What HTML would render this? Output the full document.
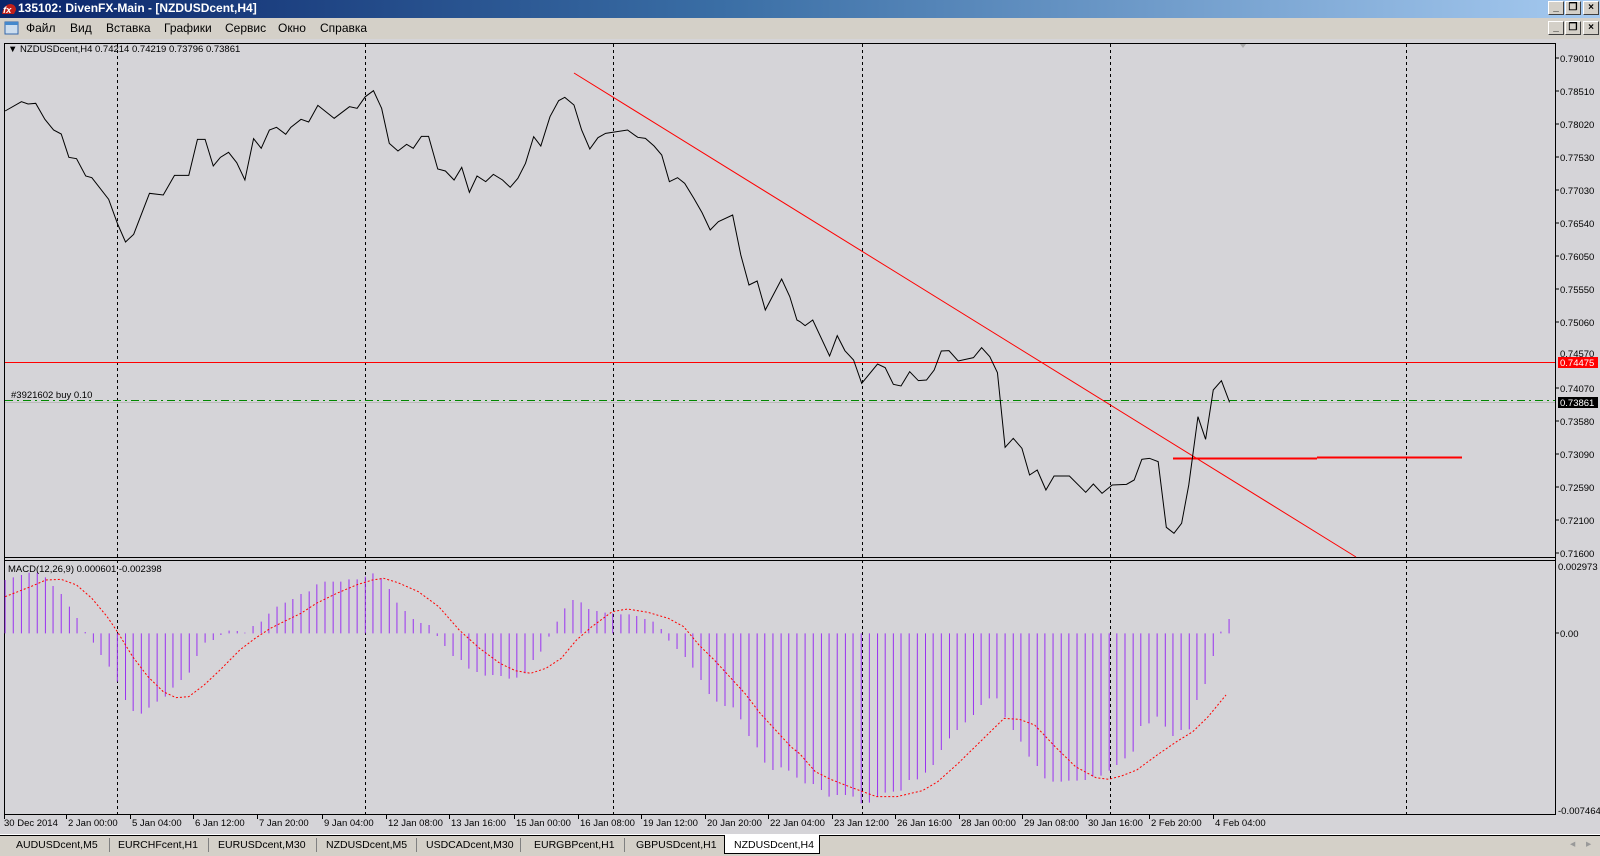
<!DOCTYPE html>
<html><head><meta charset="utf-8"><style>
*{margin:0;padding:0;box-sizing:border-box}
body{width:1600px;height:856px;overflow:hidden;background:#d4d0c8;font-family:"Liberation Sans",sans-serif;position:relative}
#title{position:absolute;left:0;top:0;width:1600px;height:18px;background:linear-gradient(90deg,#0a246a 0%,#3a6ea5 45%,#a6caf0 100%);color:#fff;font-weight:bold;font-size:12px;line-height:17px;padding-left:18px}
#menu{position:absolute;left:0;top:18px;width:1600px;height:20px;font-size:12px;line-height:20px;color:#000}
#menu span{position:absolute}
.btn{position:absolute;width:16px;height:14px;background:#d4d0c8;border:1px solid;border-color:#fff #404040 #404040 #fff;font-size:10px;line-height:12px;text-align:center;color:#000;font-weight:bold}
#tabs{position:absolute;left:0;top:834px;width:1600px;height:22px;border-top:1px solid #fff;font-size:10.5px;color:#000}
#tabs span{position:absolute;top:4px}
.sep{position:absolute;top:3px;width:1px;height:14px;background:#808080}
svg text{font-family:"Liberation Sans",sans-serif;font-size:9.5px}
</style></head><body>
<div id="title"><svg style="position:absolute;left:1px;top:2px" width="16" height="14"><path d="M1 12 Q3 2 10 2 Q15 3 15 8 L13 12Z" fill="#c0201a"/><text x="2" y="11" fill="#fff" font-size="7" font-style="italic">fx</text></svg>135102: DivenFX-Main - [NZDUSDcent,H4]</div>
<div class="btn" style="left:1548px;top:1px">_</div><div class="btn" style="left:1565px;top:1px">&#x2750;</div><div class="btn" style="left:1583px;top:1px">×</div>
<div id="menu">
<svg style="position:absolute;left:4px;top:2px" width="16" height="16"><rect x="1" y="2" width="13" height="12" fill="#cde" stroke="#36a"/><rect x="1" y="2" width="13" height="3" fill="#48c"/></svg>
<span style="left:26px">Файл</span><span style="left:70px">Вид</span><span style="left:106px">Вставка</span><span style="left:164px">Графики</span><span style="left:225px">Сервис</span><span style="left:278px">Окно</span><span style="left:320px">Справка</span>
</div>
<div class="btn" style="left:1548px;top:21px">_</div><div class="btn" style="left:1565px;top:21px">&#x2750;</div><div class="btn" style="left:1583px;top:21px">×</div>
<svg style="position:absolute;left:0;top:0" width="1600" height="856">
<rect x="0" y="39" width="1600" height="795" fill="#d5d4d8"/>
<rect x="4.5" y="43.5" width="1551" height="771" fill="none" stroke="#000"/>
<line x1="4" y1="557.5" x2="1556" y2="557.5" stroke="#000"/>
<line x1="4" y1="560.5" x2="1556" y2="560.5" stroke="#000"/>
<g stroke="#000" stroke-dasharray="3 3">
<line x1="117.5" y1="44" x2="117.5" y2="814"/><line x1="365.5" y1="44" x2="365.5" y2="814"/><line x1="613.5" y1="44" x2="613.5" y2="814"/><line x1="862.5" y1="44" x2="862.5" y2="814"/><line x1="1110.5" y1="44" x2="1110.5" y2="814"/><line x1="1406.5" y1="44" x2="1406.5" y2="814"/>
</g>
<path d="M1240 44 L1246 44 L1243 48Z" fill="#aaa"/>
<line x1="5" y1="362.5" x2="1555" y2="362.5" stroke="#f00"/>
<line x1="5" y1="402.5" x2="1555" y2="402.5" stroke="#bbb"/>
<line x1="5" y1="400.5" x2="1555" y2="400.5" stroke="#080" stroke-dasharray="8 4 2 4"/>
<line x1="574" y1="73" x2="1356" y2="557" stroke="#f00"/>
<path d="M1173 458.5 H1317 M1317 457.5 H1462" stroke="#f00" stroke-width="2"/>
<g transform="translate(0,40) scale(0.5102,0.33333)">
<path fill="none" stroke="#000" stroke-width="1" vector-effect="non-scaling-stroke" d="M10,213 42,185 55,192 70,190 88,238 105,270 120,282 135,352 150,356 168,408 180,413 213,478 230,550 246,606 262,583 293,460 320,465 342,406 370,406 387,298 402,298 418,378 432,352 448,337 464,368 480,420 497,296 512,325 528,270 542,262 560,283 570,262 590,238 605,246 623,196 655,235 685,200 700,205 716,170 732,152 748,205 763,310 780,333 797,313 810,325 826,289 840,289 858,387 873,393 890,420 905,382 920,457 935,408 952,425 967,403 985,420 1000,442 1015,415 1030,370 1046,290 1060,318 1078,230 1095,182 1107,172 1125,195 1140,270 1156,327 1172,293 1187,280 1230,270 1250,292 1265,295 1282,318 1297,345 1312,425 1328,413 1342,430 1360,475 1376,518 1392,570 1408,545 1436,525 1452,645 1468,735 1484,723 1500,810 1532,717 1548,770 1562,840 1568,845 1578,857 1593,840 1626,948 1641,887 1656,932 1673,960 1689,1030 1720,972 1735,983 1751,1033 1766,1038 1783,995 1800,1022 1816,1020 1831,990 1845,933 1860,932 1878,963 1908,953 1924,923 1940,950 1955,998 1970,1222 1986,1195 2003,1225 2018,1305 2033,1290 2050,1350 2066,1308 2096,1308 2128,1357 2143,1332 2160,1360 2180,1335 2208,1333 2223,1320 2238,1258 2253,1255 2270,1265 2286,1462 2301,1480 2316,1450 2330,1335 2348,1130 2363,1198 2378,1050 2394,1022 2410,1087"/>
</g>
<g transform="translate(0,550) scale(0.5102,0.33333)">
<path fill="none" stroke="#9a32f0" stroke-width="1" vector-effect="non-scaling-stroke" d="M10 250V90M26 250V82M42 250V75M57 250V68M73 250V68M89 250V82M104 250V108M120 250V132M136 250V170M151 250V204M167 250V246M183 250V278M198 250V315M214 250V350M230 250V395M246 250V450M261 250V483M277 250V491M292 250V473M308 250V455M324 250V440M339 250V413M355 250V390M371 250V368M386 250V318M402 250V278M418 250V270M433 250V255M449 250V242M465 250V243M480 250V248M496 250V228M512 250V215M527 250V191M543 250V170M559 250V158M574 250V147M590 250V132M606 250V124M621 250V103M637 250V95M653 250V95M668 250V95M684 250V88M700 250V88M716 250V80M731 250V70M747 250V84M763 250V117M778 250V158M794 250V183M810 250V207M825 250V219M841 250V225M857 250V258M872 250V288M888 250V318M904 250V330M919 250V356M935 250V366M951 250V377M966 250V375M982 250V378M998 250V386M1013 250V383M1029 250V370M1045 250V330M1060 250V305M1076 250V260M1092 250V215M1107 250V175M1123 250V150M1139 250V157M1154 250V177M1170 250V183M1186 250V188M1201 250V190M1217 250V193M1233 250V193M1248 250V198M1264 250V207M1280 250V215M1296 250V237M1311 250V272M1327 250V297M1343 250V321M1358 250V353M1374 250V390M1390 250V432M1405 250V455M1421 250V468M1437 250V472M1452 250V508M1468 250V558M1484 250V592M1499 250V638M1515 250V660M1531 250V652M1546 250V662M1562 250V683M1578 250V700M1594 250V702M1610 250V720M1625 250V740M1641 250V735M1657 250V735M1672 250V740M1688 250V760M1704 250V758M1720 250V740M1735 250V728M1751 250V725M1766 250V722M1782 250V690M1798 250V688M1814 250V668M1829 250V645M1845 250V600M1861 250V565M1876 250V540M1892 250V517M1908 250V495M1923 250V465M1939 250V445M1954 250V445M1970 250V502M1986 250V540M2001 250V575M2017 250V620M2033 250V648M2048 250V685M2064 250V695M2080 250V695M2095 250V692M2111 250V692M2127 250V690M2142 250V680M2158 250V677M2174 250V662M2189 250V645M2205 250V625M2221 250V605M2236 250V528M2252 250V520M2268 250V500M2284 250V530M2299 250V558M2315 250V540M2331 250V538M2346 250V450M2362 250V402M2378 250V318M2393 250V245M2409 250V207"/>
<path fill="none" stroke="#f00" stroke-width="1" stroke-dasharray="2 2" vector-effect="non-scaling-stroke" d="M10,140 40,122 60,110 90,90 120,88 150,105 180,145 210,200 230,245 260,320 290,380 320,425 345,443 370,440 400,405 430,362 470,300 500,265 530,235 560,212 590,190 620,160 660,130 700,104 730,90 752,85 780,98 820,125 860,170 900,240 940,295 980,340 1010,362 1040,370 1070,355 1100,325 1130,270 1160,230 1200,185 1230,177 1270,187 1310,205 1340,230 1370,285 1400,330 1430,380 1460,430 1490,490 1520,540 1550,590 1568,612 1598,665 1628,688 1668,712 1718,740 1758,740 1808,722 1838,695 1878,640 1928,565 1968,505 1998,508 2028,525 2068,590 2108,650 2148,683 2173,688 2198,678 2228,660 2268,615 2308,573 2338,545 2368,500 2403,435"/>
</g>
<text x="8" y="52" font-size="9">▼ NZDUSDcent,H4  0.74214 0.74219 0.73796 0.73861</text>
<text x="11" y="398" font-size="9">#3921602 buy 0.10</text>
<text x="8" y="572" font-size="9">MACD(12,26,9) 0.000601 -0.002398</text>
<g fill="#000">
<text x="1560" y="62">0.79010</text><text x="1560" y="95">0.78510</text><text x="1560" y="128">0.78020</text><text x="1560" y="161">0.77530</text><text x="1560" y="194">0.77030</text><text x="1560" y="227">0.76540</text><text x="1560" y="260">0.76050</text><text x="1560" y="293">0.75550</text><text x="1560" y="326">0.75060</text><text x="1560" y="357">0.74570</text><text x="1560" y="392">0.74070</text><text x="1560" y="425">0.73580</text><text x="1560" y="458">0.73090</text><text x="1560" y="491">0.72590</text><text x="1560" y="524">0.72100</text><text x="1560" y="557">0.71600</text>
<text x="1558" y="570">0.002973</text><text x="1560" y="637">0.00</text><text x="1558" y="814">-0.007464</text>
</g>
<g stroke="#000"><line x1="1556" y1="58" x2="1559" y2="58"/><line x1="1556" y1="91" x2="1559" y2="91"/><line x1="1556" y1="124" x2="1559" y2="124"/><line x1="1556" y1="157" x2="1559" y2="157"/><line x1="1556" y1="190" x2="1559" y2="190"/><line x1="1556" y1="223" x2="1559" y2="223"/><line x1="1556" y1="256" x2="1559" y2="256"/><line x1="1556" y1="289" x2="1559" y2="289"/><line x1="1556" y1="322" x2="1559" y2="322"/><line x1="1556" y1="388" x2="1559" y2="388"/><line x1="1556" y1="421" x2="1559" y2="421"/><line x1="1556" y1="454" x2="1559" y2="454"/><line x1="1556" y1="487" x2="1559" y2="487"/><line x1="1556" y1="520" x2="1559" y2="520"/><line x1="1556" y1="553" x2="1559" y2="553"/><line x1="1556" y1="633" x2="1559" y2="633"/></g>
<rect x="1558" y="357" width="40" height="11" fill="#f00"/><text x="1560" y="366" fill="#fff">0.74475</text>
<rect x="1558" y="397" width="40" height="11" fill="#000"/><text x="1560" y="406" fill="#fff">0.73861</text>
<g font-size="9.5" fill="#000">
<text x="4" y="826">30 Dec 2014</text><text x="68" y="826">2 Jan 00:00</text><text x="132" y="826">5 Jan 04:00</text><text x="195" y="826">6 Jan 12:00</text><text x="259" y="826">7 Jan 20:00</text><text x="324" y="826">9 Jan 04:00</text><text x="388" y="826">12 Jan 08:00</text><text x="451" y="826">13 Jan 16:00</text><text x="516" y="826">15 Jan 00:00</text><text x="580" y="826">16 Jan 08:00</text><text x="643" y="826">19 Jan 12:00</text><text x="707" y="826">20 Jan 20:00</text><text x="770" y="826">22 Jan 04:00</text><text x="834" y="826">23 Jan 12:00</text><text x="897" y="826">26 Jan 16:00</text><text x="961" y="826">28 Jan 00:00</text><text x="1024" y="826">29 Jan 08:00</text><text x="1088" y="826">30 Jan 16:00</text><text x="1151" y="826">2 Feb 20:00</text><text x="1215" y="826">4 Feb 04:00</text>
</g>
<g stroke="#000"><line x1="4.5" y1="815" x2="4.5" y2="819"/><line x1="66.5" y1="815" x2="66.5" y2="819"/><line x1="130.5" y1="815" x2="130.5" y2="819"/><line x1="193.5" y1="815" x2="193.5" y2="819"/><line x1="257.5" y1="815" x2="257.5" y2="819"/><line x1="322.5" y1="815" x2="322.5" y2="819"/><line x1="386.5" y1="815" x2="386.5" y2="819"/><line x1="449.5" y1="815" x2="449.5" y2="819"/><line x1="514.5" y1="815" x2="514.5" y2="819"/><line x1="578.5" y1="815" x2="578.5" y2="819"/><line x1="641.5" y1="815" x2="641.5" y2="819"/><line x1="705.5" y1="815" x2="705.5" y2="819"/><line x1="768.5" y1="815" x2="768.5" y2="819"/><line x1="832.5" y1="815" x2="832.5" y2="819"/><line x1="895.5" y1="815" x2="895.5" y2="819"/><line x1="959.5" y1="815" x2="959.5" y2="819"/><line x1="1022.5" y1="815" x2="1022.5" y2="819"/><line x1="1086.5" y1="815" x2="1086.5" y2="819"/><line x1="1149.5" y1="815" x2="1149.5" y2="819"/><line x1="1213.5" y1="815" x2="1213.5" y2="819"/></g>
</svg>
<div id="tabs">
<div style="position:absolute;left:0;top:0;width:1600px;height:1px;background:#000"></div>
<span style="left:16px">AUDUSDcent,M5</span><div class="sep" style="left:109px"></div>
<span style="left:118px">EURCHFcent,H1</span><div class="sep" style="left:208px"></div>
<span style="left:218px">EURUSDcent,M30</span><div class="sep" style="left:316px"></div>
<span style="left:326px">NZDUSDcent,M5</span><div class="sep" style="left:416px"></div>
<span style="left:426px">USDCADcent,M30</span><div class="sep" style="left:520px"></div>
<span style="left:534px">EURGBPcent,H1</span><div class="sep" style="left:624px"></div>
<span style="left:636px">GBPUSDcent,H1</span>
<div style="position:absolute;left:724px;top:0;width:96px;height:19px;background:#fff;border:1px solid #000;border-top:none"></div>
<span style="left:734px">NZDUSDcent,H4</span>
<span style="left:1570px;color:#999;top:3px">◂</span><span style="left:1586px;color:#999;top:3px">▸</span>
</div>
</body></html>
